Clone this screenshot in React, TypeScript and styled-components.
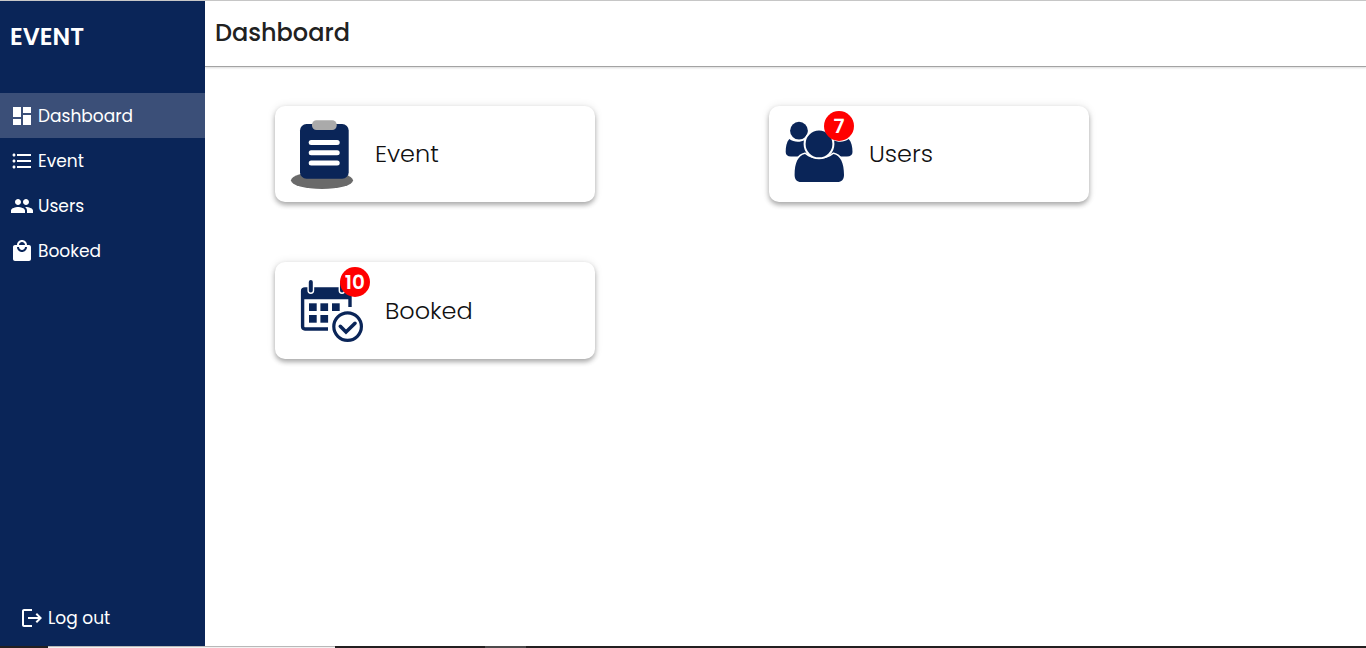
import React from "react";
import styled, { createGlobalStyle } from "styled-components";
import {
  MdDashboard,
  MdFormatListBulleted,
  MdLocalMall,
  MdLogout,
  MdPeople,
} from "react-icons/md";

const navy = "#0a2558";

const GlobalStyle = createGlobalStyle`
  *, *::before, *::after { box-sizing: border-box; }
  body {
    margin: 0;
    background: #fff;
    color: #212121;
    font-family: Poppins, Inter, "Liberation Sans", sans-serif;
  }
`;

const Page = styled.div`
  display: flex;
  flex-direction: column;
  min-height: 100vh;
  border-top: 1px solid #c8c8c8;
`;

const Layout = styled.div`
  display: flex;
  flex: 1;
`;

const Sidebar = styled.aside`
  display: flex;
  flex-direction: column;
  flex: 0 0 15%;
  background: ${navy};
  color: #fff;
`;

const Brand = styled.div`
  padding: 20px 10px 40px;
  font-size: 24px;
  font-weight: 600;
  line-height: 32px;
`;

const NavList = styled.nav`
  display: flex;
  flex-direction: column;
  flex: 1;
`;

const NavLink = styled.a<{ $active?: boolean }>`
  display: flex;
  align-items: center;
  gap: 4px;
  height: 45px;
  padding: 0 10px;
  background: ${(p) => (p.$active ? "#3b4f78" : "transparent")};
  color: #fff;
  font-size: 17px;
  text-decoration: none;
`;

const LogoutButton = styled.button`
  display: flex;
  align-items: center;
  gap: 4px;
  margin-bottom: 4px;
  padding: 12px 20px;
  border: 0;
  background: transparent;
  color: #fff;
  font: inherit;
  font-size: 17px;
  line-height: 24px;
  cursor: pointer;
`;

const Main = styled.main`
  flex: 1;
  min-width: 0;
`;

const Header = styled.header`
  padding: 16px 10px 17px;
  border-bottom: 1px solid #a3a3a3;
  box-shadow: 0 1px 2px rgba(0, 0, 0, 0.15);
`;

const Title = styled.h1`
  margin: 0;
  font-size: 24px;
  font-weight: 500;
  line-height: 32px;
`;

const CardGrid = styled.section`
  display: grid;
  grid-template-columns: 1fr 1fr;
  row-gap: 60px;
  padding: 39px 103px 40px 70px;
`;

const Card = styled.a`
  display: flex;
  align-items: center;
  gap: 10px;
  width: 320px;
  max-width: 100%;
  padding: 10px;
  border-radius: 10px;
  background: #fff;
  box-shadow: 0 3px 5px rgba(0, 0, 0, 0.3), 0 0 9px rgba(0, 0, 0, 0.1);
  color: #111;
  text-decoration: none;
`;

const Picture = styled.span`
  position: relative;
  display: flex;
`;

const Badge = styled.span`
  position: absolute;
  top: -5px;
  right: 5px;
  min-width: 30px;
  height: 30px;
  padding: 0 5px;
  border-radius: 15px;
  background: #f00;
  color: #fff;
  font-size: 20px;
  font-weight: 600;
  line-height: 30px;
  text-align: center;
`;

const CardLabel = styled.span`
  font-size: 24px;
  font-weight: 300;
  line-height: 36px;
`;

const Taskbar = styled.footer`
  display: flex;
  height: 2px;
  background: #231f20;
`;

const TaskbarGap = styled.div<{ $share: string }>`
  width: ${(p) => p.$share};
`;

const TaskbarSearch = styled.div`
  width: 21%;
  border-top: 1px solid #b8b8b8;
  background: #f2f2f2;
`;

const TaskbarTab = styled.div`
  width: 3%;
  background: #4d4b4c;
`;

function ClipboardArt() {
  return (
    <svg width="80" height="76" viewBox="0 0 80 76" aria-hidden="true">
      <ellipse cx="37" cy="64.3" rx="31" ry="8.7" fill="#6a6a6a" />
      <rect x="15" y="8" width="48.7" height="54.7" rx="6.5" fill={navy} />
      <rect x="27" y="4.3" width="24.7" height="9.7" rx="4.5" fill="#aaa" />
      <g fill="#fff">
        <rect x="23.7" y="24" width="31" height="5" rx="2.5" />
        <rect x="23.7" y="34.2" width="31" height="5" rx="2.5" />
        <rect x="23.7" y="44.4" width="31" height="5" rx="2.5" />
      </g>
    </svg>
  );
}

function PeopleArt() {
  return (
    <svg width="80" height="76" viewBox="0 0 80 76" aria-hidden="true">
      <g fill={navy}>
        <circle cx="20" cy="14.7" r="8.9" />
        <circle cx="60" cy="14.7" r="8.9" />
        <path d="M10.3 23C15 26.5 21 26.5 26 24L31 40.5H12C8.5 40.5 6.7 38.8 6.7 36C6.7 31 7.5 26 10.3 23Z" />
        <path d="M69.7 23C65 26.5 59 26.5 54 24L49 40.5H68C71.5 40.5 73.5 38.8 73.5 36C73.5 31 72.5 26 69.7 23Z" />
        <path
          d="M26 38C34 44.5 46 44.5 54.5 38C61.5 39.5 65 47 65 59C65 63.5 62.5 66 58.5 66H22C18 66 15.6 63.5 15.6 59C15.6 47 19 39.5 26 38Z"
          stroke="#fff"
          strokeWidth="3"
          paintOrder="stroke"
        />
        <circle cx="40" cy="27.9" r="14.4" stroke="#fff" strokeWidth="2" />
      </g>
    </svg>
  );
}

function CalendarArt() {
  return (
    <svg width="90" height="77" viewBox="0 0 90 77" aria-hidden="true">
      <path
        d="M43 57H20Q17.6 57 17.6 54.6V19Q17.6 17 20 17H62.5Q65 17 65 19V35"
        fill="none"
        stroke={navy}
        strokeWidth="3.4"
      />
      <path d="M17 16H65V27.3H17Z" fill={navy} />
      <g strokeLinecap="round">
        <path d="M25.8 10V18.5M57 10V18.5" stroke="#fff" strokeWidth="6.8" />
        <path d="M25.8 10V18.5M57 10V18.5" stroke={navy} strokeWidth="4" />
      </g>
      <g fill={navy}>
        <rect x="24" y="31.3" width="7.7" height="7.7" />
        <rect x="35.4" y="31.3" width="7.7" height="7.7" />
        <rect x="47" y="31.3" width="7.7" height="7.7" />
        <rect x="24" y="43" width="7.7" height="7.7" />
        <rect x="35.4" y="43" width="7.7" height="7.7" />
      </g>
      <circle cx="62.6" cy="54.6" r="13.8" fill="#fff" stroke={navy} strokeWidth="3.2" />
      <path
        d="M55.3 54.3L61 60L70 51.3"
        fill="none"
        stroke={navy}
        strokeWidth="3.6"
        strokeLinecap="round"
      />
    </svg>
  );
}

const navItems = [
  { label: "Dashboard", Icon: MdDashboard, active: true },
  { label: "Event", Icon: MdFormatListBulleted },
  { label: "Users", Icon: MdPeople },
  { label: "Booked", Icon: MdLocalMall },
];

const cards = [
  { label: "Event", Art: ClipboardArt },
  { label: "Users", Art: PeopleArt, count: 7 },
  { label: "Booked", Art: CalendarArt, count: 10 },
];

export default function App() {
  return (
    <>
      <GlobalStyle />
      <Page>
        <Layout>
          <Sidebar>
            <Brand>EVENT</Brand>
            <NavList>
              {navItems.map(({ label, Icon, active }) => (
                <NavLink key={label} href="#" $active={active}>
                  <Icon size={24} />
                  {label}
                </NavLink>
              ))}
            </NavList>
            <LogoutButton type="button">
              <MdLogout size={24} />
              Log out
            </LogoutButton>
          </Sidebar>
          <Main>
            <Header>
              <Title>Dashboard</Title>
            </Header>
            <CardGrid>
              {cards.map(({ label, Art, count }) => (
                <Card key={label} href="#">
                  <Picture>
                    <Art />
                    {count && <Badge>{count}</Badge>}
                  </Picture>
                  <CardLabel>{label}</CardLabel>
                </Card>
              ))}
            </CardGrid>
          </Main>
        </Layout>
        <Taskbar>
          <TaskbarGap $share="48px" />
          <TaskbarSearch />
          <TaskbarGap $share="11%" />
          <TaskbarTab />
        </Taskbar>
      </Page>
    </>
  );
}
